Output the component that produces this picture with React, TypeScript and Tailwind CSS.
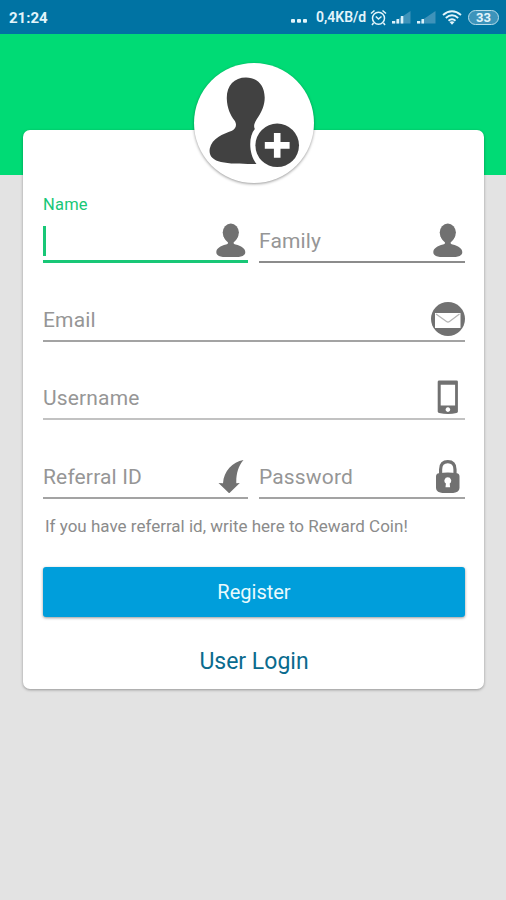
import type { ReactNode } from "react"
import clsx from "clsx"

const iconClass = "block size-[34px] shrink-0 fill-[#717171]"

function PersonIcon() {
  return (
    <svg viewBox="0 0 34 34" className={iconClass}>
      <ellipse cx="16.800" cy="9.500" rx="8.100" ry="9" />
      <path d="M9.500 13C10.500 15.800 12 17.800 13.800 19.300C14.400 20.500 13.500 21.300 12 21.600C6.500 22.800 2.300 25.600 2.300 29.300C2.300 33.300 8 34.500 16.800 34.500S31.300 33.300 31.300 29.300C31.300 25.600 27.100 22.800 21.600 21.600C20.100 21.300 19.200 20.500 19.800 19.300C21.600 17.800 23.100 15.800 24.100 13Z" />
    </svg>
  )
}

function MailIcon() {
  return (
    <svg viewBox="0 0 34 34" className={iconClass}>
      <circle cx="17" cy="17" r="17" />
      <rect x="4" y="11" width="25.500" height="15" className="fill-white" />
      <path d="M5 12 15.500 19.500q1.500 1.100 3 0L28.500 12" fill="none" stroke="#b5b5b5" strokeWidth="1.300" />
    </svg>
  )
}

function PhoneIcon() {
  return (
    <svg viewBox="0 0 34 34" className={iconClass}>
      <path
        fillRule="evenodd"
        d="M8.200 .5H25.600Q26.900 .5 26.900 1.700V31.500Q26.900 32.600 25.500 33Q17.300 35 8.200 33Q6.700 32.600 6.700 31.500V1.700Q6.700 .5 8.200 .5ZM9.700 4.800V25.400H24.100V4.800ZM16.900 27.300a2.300 2.300 0 1 0 .01 0Z"
      />
    </svg>
  )
}

function ArrowIcon() {
  return (
    <svg viewBox="0 0 34 34" className={iconClass}>
      <path d="M29.500 1C18.500 3 9.800 12 9 24.300L4.500 24 15.200 34.300 25.800 24 22.300 24.300C22 15.500 24 7.500 29.500 1Z" />
    </svg>
  )
}

function LockIcon() {
  return (
    <svg viewBox="0 0 34 34" className={iconClass}>
      <path d="M9.600 16V10.500C9.600 5 12.400 2.600 16.800 2.600S24 5 24 10.500V16" fill="none" stroke="#717171" strokeWidth="3.200" />
      <path
        fillRule="evenodd"
        d="M7.900 14.200Q16.800 12.800 25.800 14.200Q28.500 14.600 28.500 17.400V29Q28.500 31.500 26.400 32.700Q16.800 36.500 7.100 32.700Q5 31.500 5 29V17.400Q5 14.600 7.900 14.200ZM16.800 18.300A3.400 3.400 0 0 0 14.900 24.500L14.500 28.300H19.100L18.700 24.500A3.400 3.400 0 0 0 16.800 18.300Z"
      />
    </svg>
  )
}

function AddUserIcon() {
  return (
    <svg viewBox="0 0 120 120" className="size-full">
      <path
        fill="#414141"
        d="M52 14.500C40 14.500 32.500 23 32.800 35.500C33 45 36.500 52.500 40.500 57.500C43 61 42.500 65.500 38 67.700C29 71 18 75 15.800 85.500C14.500 93 19 97 27 99C36 101 48 100.900 62.500 100.900C55 92 54 74 60.800 66C58.800 62 61.500 58 64.500 53.500C68 48 70.700 42 70.700 34.500C70.500 22 63 14.500 52 14.500Z"
      />
      <circle cx="83.200" cy="82.300" r="21.800" fill="#414141" />
      <path d="M83.200 70V94.800M70.800 82.400H95.600" stroke="#fff" strokeWidth="6.600" />
    </svg>
  )
}

type FieldProps = {
  label: string
  icon: ReactNode
  line?: string
  active?: boolean
}

function Field({ label, icon, line = "border-[#a3a3a3]", active }: FieldProps) {
  return (
    <div
      className={clsx(
        "relative flex h-10 items-start justify-between",
        active ? "border-b-3 border-[#18c777]" : ["border-b-2", line],
      )}
    >
      {active ? (
        <>
          <span className="absolute -top-[27px] left-0 text-[16.500px] leading-4.5 tracking-[0.2px] text-[#18c777]">
            {label}
          </span>
          <span className="mt-[3px] h-[30px] w-[3px] bg-[#18c777]" />
        </>
      ) : (
        <span className="text-[21px] leading-[37px] tracking-[0.15px] text-[#969696]">{label}</span>
      )}
      {icon}
    </div>
  )
}

function Signal({ strong }: { strong?: boolean }) {
  return (
    <svg viewBox="0 0 19 14" className="h-3.5 w-[19px]">
      <path d="M0 13.500 18.500 1V13.500Z" fill="#3f93ba" />
      <path
        d={strong ? "M0 11h3v2.500H0ZM4.500 9h2.500v4.500H4.500ZM8.800 6h2.500v7.500h-2.500Z" : "M0 11h3v2.500H0ZM4.500 9h2.500v4.500H4.500Z"}
        fill="#d9f1fa"
      />
    </svg>
  )
}

function StatusBar() {
  return (
    <header className="flex h-[34px] items-center bg-[#0073a3] pr-[7px] pl-[9px] text-[#e2f5fb]">
      <span className="mt-[3px] text-[15px] font-bold">21:24</span>
      <div className="ml-auto flex items-center">
        <svg viewBox="0 0 16 4" className="mt-2 mr-[9px] h-1 w-4 fill-current">
          <rect width="4" height="3.800" rx="1" />
          <rect x="6" width="4" height="3.800" rx="1" />
          <rect x="12" width="4" height="3.800" rx="1" />
        </svg>
        <span className="mr-[3px] w-[50px] text-[14px] font-semibold whitespace-nowrap">0,4KB/d</span>
        <svg viewBox="0 0 17 17" className="mr-[5px] ml-px size-[17px] fill-none stroke-current" strokeWidth="1.500">
          <circle cx="8.500" cy="9.200" r="6" />
          <path d="M1 4.500 4.500 1.500M16 4.500 12.500 1.500M3.500 14 2 16M13.500 14 15 16M5.800 7.500 8.500 10 11.500 7.500" />
        </svg>
        <Signal strong />
        <span className="w-[6px]" />
        <Signal />
        <svg viewBox="0 0 20 15" className="mr-[6px] ml-[6px] h-[15px] w-5 fill-none stroke-current" strokeWidth="1.900">
          <path d="M1 5Q10-2.500 19 5M3.800 8Q10 2.700 16.200 8M6.500 10.800Q10 7.800 13.500 10.800" />
          <path d="M7.500 12 10 14.700 12.500 12Q10 10.300 7.500 12Z" fill="currentColor" stroke="none" />
        </svg>
        <div className="flex h-[15px] w-[31px] items-center justify-center rounded-full border-[1.500px] border-[#b8dcea] bg-[#3c94bb] text-[13px] leading-none font-bold">
          33
        </div>
      </div>
    </header>
  )
}

export default function App() {
  return (
    <div className="h-[900px] w-[506px] overflow-hidden bg-[#e3e3e3] font-['Roboto',sans-serif]">
      <StatusBar />
      <div className="h-[141px] bg-[#00db75]" />

      <main className="relative mt-[-45px] ml-[23px] h-[559px] w-[461px] rounded-[7px] bg-white pr-[19px] pl-5 pt-[93px] shadow-[0_1px_3px_rgba(0,0,0,0.35)]">
        {/* Avatar sits half outside the card */}
        <div className="absolute -top-[67px] left-[170.500px] size-[120px] rounded-full bg-white shadow-[0_1px_3px_rgba(0,0,0,0.4)]">
          <AddUserIcon />
        </div>

        <form>
          <div className="grid grid-cols-[205px_1fr] gap-[11px]">
            <Field label="Name" icon={<PersonIcon />} active />
            <Field label="Family" icon={<PersonIcon />} line="border-[#8c8c8c]" />
          </div>
          <div className="mt-[39px]">
            <Field label="Email" icon={<MailIcon />} />
          </div>
          <div className="mt-[38px]">
            <Field label="Username" icon={<PhoneIcon />} line="border-[#c2c2c2]" />
          </div>
          <div className="mt-[39px] grid grid-cols-[205px_1fr] gap-[11px]">
            <Field label="Referral ID" icon={<ArrowIcon />} />
            <Field label="Password" icon={<LockIcon />} />
          </div>
          <p className="mt-[17px] ml-0.5 text-[17px] leading-5 whitespace-nowrap text-[#8b8b8b]">
            If you have referral id, write here to Reward Coin!
          </p>
          <button
            type="button"
            className="mt-[31px] block h-[50px] w-full rounded-[3px] bg-[#009edb] text-[20px] text-[#e9fafd] shadow-[0_1px_3px_rgba(0,0,0,0.4)]"
          >
            Register
          </button>
          <a href="#" className="mt-[31px] block text-center text-[23px] leading-7 text-[#0a6b8e]">
            User Login
          </a>
        </form>
      </main>
    </div>
  )
}
